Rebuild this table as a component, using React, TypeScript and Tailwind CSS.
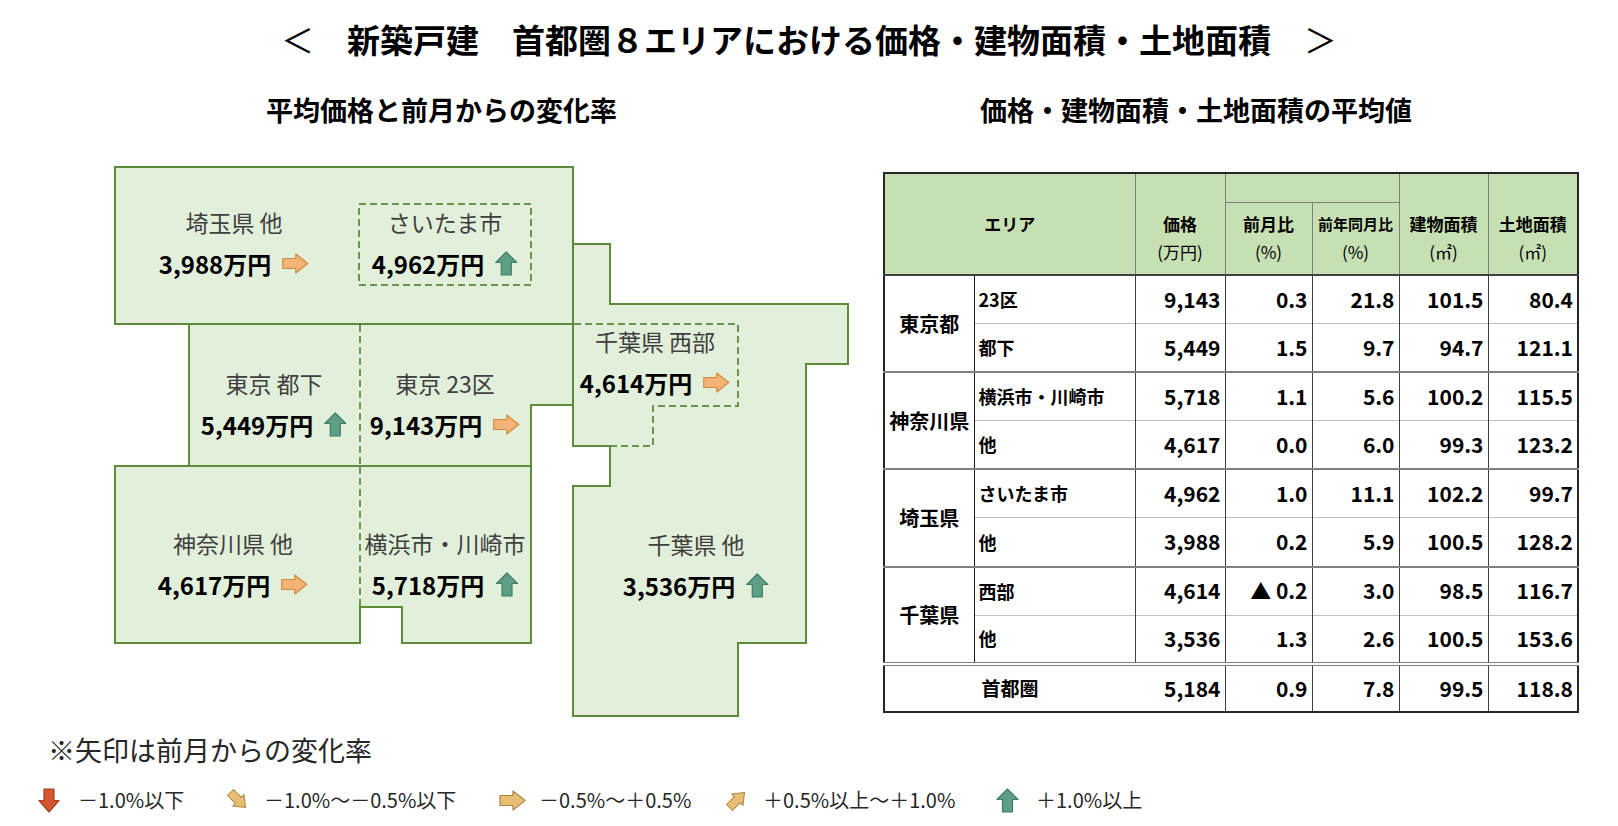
import React from "react";

type Dir = "up" | "right" | "down" | "upright" | "downright";

function Arrow({ dir, map = false }: { dir: Dir; map?: boolean }) {
  if (dir === "up") {
    return (
      <svg className="shrink-0" width="23" height="25" viewBox="0 0 23 25">
        <path d="M11.5 1 L22 11.5 H16.5 V24 H6.5 V11.5 H1 Z" fill="#5e9e86" stroke="#3f7c65" strokeWidth="1.2" strokeLinejoin="round" />
      </svg>
    );
  }
  if (dir === "down") {
    return (
      <svg className="shrink-0" width="22" height="25" viewBox="0 0 22 25">
        <path d="M6 1 H16 V12.5 H21 L11 24 L1 12.5 H6 Z" fill="#d5552f" stroke="#a73c1e" strokeWidth="1.2" strokeLinejoin="round" />
      </svg>
    );
  }
  const fill = map ? "#f5b378" : "#e8bd74";
  const stroke = map ? "#d08a3e" : "#ab8742";
  const rot = dir === "upright" ? -45 : dir === "downright" ? 45 : 0;
  const size = rot === 0 ? { w: 27, h: 21 } : { w: 28, h: 28 };
  return (
    <svg className="shrink-0" width={size.w} height={size.h} viewBox={rot === 0 ? "0 0 27 21" : "-3 -6 33 33"}>
      <g transform={`rotate(${rot} 13.5 10.5)`}>
        <path d="M1 5.5 H14 V1 L26 10.5 L14 20 V15.5 H1 Z" fill={fill} stroke={stroke} strokeWidth="1.2" strokeLinejoin="round" />
      </g>
    </svg>
  );
}

const regions: { name: string; price: string; dir: Dir; pos: string }[] = [
  { name: "埼玉県 他", price: "3,988万円", dir: "right", pos: "left-[234px] top-[42px]" },
  { name: "さいたま市", price: "4,962万円", dir: "up", pos: "left-[445px] top-[42px]" },
  { name: "東京 都下", price: "5,449万円", dir: "up", pos: "left-[274px] top-[203px]" },
  { name: "東京 23区", price: "9,143万円", dir: "right", pos: "left-[445px] top-[203px]" },
  { name: "千葉県 西部", price: "4,614万円", dir: "right", pos: "left-[655px] top-[161px]" },
  { name: "神奈川県 他", price: "4,617万円", dir: "right", pos: "left-[233px] top-[363px]" },
  { name: "横浜市・川崎市", price: "5,718万円", dir: "up", pos: "left-[445px] top-[363px]" },
  { name: "千葉県 他", price: "3,536万円", dir: "up", pos: "left-[696px] top-[364px]" },
];

function AreaMap() {
  const fill = "#e2efda";
  const line = "#5b8b3b";
  const dash = "#6a9650";
  return (
    <div className="relative h-[560px] w-[883px] shrink-0">
      <svg className="absolute left-0 top-0" width="883" height="560" viewBox="0 160 883 560">
        <g fill={fill} stroke={line} strokeWidth="2">
          <path d="M115 167 H573 V324 H115 Z" />
          <path d="M189 324 H573 V405 H531 V466 H189 Z" />
          <path d="M115 466 H531 V643 H402 V607 H360 V643 H115 Z" />
          <path d="M573 244 H610 V304 H848 V364 H806 V643 H738 V716 H573 V486 H610 V446 H573 Z" />
        </g>
        <g fill="none" stroke={dash} strokeWidth="2" strokeDasharray="7 4">
          <rect x="359" y="204" width="172" height="81" />
          <path d="M360 325 V466" />
          <path d="M360 467 V606" />
          <path d="M574 324 H738 V406 H653 V446 H611" />
        </g>
      </svg>
      {regions.map((r) => (
        <div key={r.name} className={`absolute flex -translate-x-1/2 flex-col items-center whitespace-nowrap ${r.pos}`}>
          <div className="text-[23px] leading-[41px] text-[#3f3f3f]">{r.name}</div>
          <div className="flex items-center gap-[11px] text-[24px] font-bold leading-[41px] text-black">
            <span>{r.price}</span>
            <Arrow dir={r.dir} map />
          </div>
        </div>
      ))}
    </div>
  );
}

const rows = [
  { group: "東京都", sub: "23区", v: ["9,143", "0.3", "21.8", "101.5", "80.4"] },
  { sub: "都下", v: ["5,449", "1.5", "9.7", "94.7", "121.1"] },
  { group: "神奈川県", sub: "横浜市・川崎市", v: ["5,718", "1.1", "5.6", "100.2", "115.5"] },
  { sub: "他", v: ["4,617", "0.0", "6.0", "99.3", "123.2"] },
  { group: "埼玉県", sub: "さいたま市", v: ["4,962", "1.0", "11.1", "102.2", "99.7"] },
  { sub: "他", v: ["3,988", "0.2", "5.9", "100.5", "128.2"] },
  { group: "千葉県", sub: "西部", v: ["4,614", "▲ 0.2", "3.0", "98.5", "116.7"] },
  { sub: "他", v: ["3,536", "1.3", "2.6", "100.5", "153.6"] },
];

function PriceTable() {
  const head = "border border-[#7f7f7f] bg-[#c6e0b4] text-center align-middle font-bold";
  return (
    <table className="mt-[12px] w-[694px] self-start table-fixed border-collapse border-2 border-[#262626] text-black">
      <colgroup>
        <col className="w-[90px]" />
        <col className="w-[161px]" />
        <col className="w-[90px]" />
        <col className="w-[87px]" />
        <col className="w-[87px]" />
        <col className="w-[89px]" />
        <col className="w-[90px]" />
      </colgroup>
      <thead>
        <tr className="h-[29px]">
          <th colSpan={2} rowSpan={2} className={`${head} text-[17px]`}>エリア</th>
          <th rowSpan={2} className={`${head} pt-[27px] text-[17px] leading-[28px]`}>
            価格<br /><span className="font-normal">(万円)</span>
          </th>
          <th colSpan={2} className={head}></th>
          <th rowSpan={2} className={`${head} pt-[27px] text-[17px] leading-[28px]`}>
            建物面積<br /><span className="font-normal">(㎡)</span>
          </th>
          <th rowSpan={2} className={`${head} pt-[27px] text-[17px] leading-[28px]`}>
            土地面積<br /><span className="font-normal">(㎡)</span>
          </th>
        </tr>
        <tr className="h-[73px]">
          <th className={`${head} text-[17px] leading-[28px]`}>
            前月比<br /><span className="font-normal">(%)</span>
          </th>
          <th className={`${head} text-[15px] leading-[28px]`}>
            前年同月比<br /><span className="text-[17px] font-normal">(%)</span>
          </th>
        </tr>
      </thead>
      <tbody className="font-bold">
        {rows.map((r, i) => {
          const top = r.group
            ? i === 0
              ? "border-t-2 border-t-[#404040]"
              : "border-t-2 border-t-[#808080]"
            : "border-t border-t-[#bfbfbf]";
          return (
            <tr key={i} className="h-[48.6px]">
              {r.group && (
                <td rowSpan={2} className={`border-r border-r-[#1a1a1a] text-center align-middle text-[20px] ${top}`}>
                  {r.group}
                </td>
              )}
              <td className={`border-r border-r-[#404040] pl-[4px] text-[18px] ${top}`}>{r.sub}</td>
              {r.v.map((x, j) => (
                <td key={j} className={`border-r border-r-[#404040] pr-[4px] text-right text-[21px] ${top}`}>
                  {x}
                </td>
              ))}
            </tr>
          );
        })}
        <tr className="h-[48.6px]">
          <td colSpan={2} className="border-t-4 border-double border-t-[#7f7f7f] text-center text-[19px]">首都圏</td>
          {["5,184", "0.9", "7.8", "99.5", "118.8"].map((x, j) => (
            <td key={j} className="border-r border-t-4 border-double border-r-[#404040] border-t-[#7f7f7f] pr-[4px] text-right text-[21px]">
              {x}
            </td>
          ))}
        </tr>
      </tbody>
    </table>
  );
}

const legend: { dir: Dir; text: string; w: string }[] = [
  { dir: "down", text: "－1.0%以下", w: "w-[186px]" },
  { dir: "downright", text: "－1.0%～－0.5%以下", w: "w-[275px]" },
  { dir: "right", text: "－0.5%～＋0.5%", w: "w-[224px]" },
  { dir: "upright", text: "＋0.5%以上～＋1.0%", w: "w-[273px]" },
  { dir: "up", text: "＋1.0%以上", w: "w-[200px]" },
];

export default function App() {
  return (
    <div className="h-[826px] w-[1618px] overflow-hidden bg-white font-['Noto_Sans_CJK_JP','Noto_Sans_CJK_SC',sans-serif] text-black">
      <h1 className="pt-[19px] text-center text-[33px] font-bold leading-[40px]">
        <span className="font-normal">＜</span>　新築戸建　首都圏８エリアにおける価格・建物面積・土地面積　<span className="font-normal">＞</span>
      </h1>

      <div className="mt-[33px] flex h-[36px] items-center text-[27px] font-bold">
        <div className="w-[883px] pl-[266px]">平均価格と前月からの変化率</div>
        <div className="pl-[97px]">価格・建物面積・土地面積の平均値</div>
      </div>

      <div className="mt-[32px] flex">
        <AreaMap />
        <PriceTable />
      </div>

      <p className="mt-[13px] pl-[48px] text-[27px] leading-[34px] text-[#262626]">※矢印は前月からの変化率</p>

      <div className="mt-[18px] flex h-[30px] items-center pl-[38px] text-[20px] text-[#262626]">
        {legend.map((l) => (
          <div key={l.text} className={`flex items-center ${l.w}`}>
            <div className="flex w-[40px] items-center">
              <Arrow dir={l.dir} />
            </div>
            <span>{l.text}</span>
          </div>
        ))}
      </div>
    </div>
  );
}
